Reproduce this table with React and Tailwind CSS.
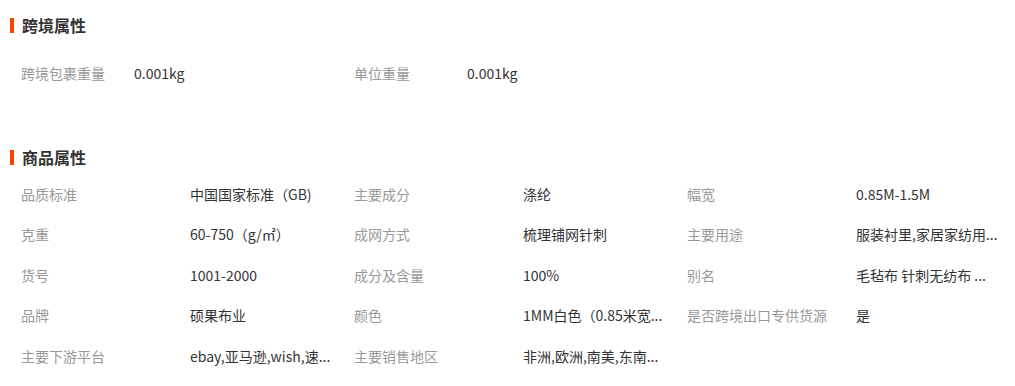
const font = { fontFamily: '"Noto Sans CJK SC", "Noto Sans", sans-serif' };

const cross = [
  ["跨境包裹重量", "0.001kg"],
  ["单位重量", "0.001kg"],
];

const attrs = [
  ["品质标准", "中国国家标准（GB)"],
  ["主要成分", "涤纶"],
  ["幅宽", "0.85M-1.5M"],
  ["克重", "60-750（g/㎡）"],
  ["成网方式", "梳理铺网针刺"],
  ["主要用途", "服装衬里,家居家纺用..."],
  ["货号", "1001-2000"],
  ["成分及含量", "100%"],
  ["别名", "毛毡布 针刺无纺布 ..."],
  ["品牌", "硕果布业"],
  ["颜色", "1MM白色（0.85米宽..."],
  ["是否跨境出口专供货源", "是"],
  ["主要下游平台", "ebay,亚马逊,wish,速..."],
  ["主要销售地区", "非洲,欧洲,南美,东南..."],
];

function Title({ children }) {
  return (
    <div className="flex items-center h-[16px]">
      <div className="w-[4px] h-[15px] bg-[#ff4400] ml-[10px] mr-[8px]" />
      <div className="text-[16px] font-bold text-[#333] leading-[16px]">{children}</div>
    </div>
  );
}

export default function App() {
  return (
    <div className="w-[1015px] h-[386px] bg-white text-[14px] overflow-hidden" style={font}>
      <div className="pt-[17px]">
        <Title>跨境属性</Title>
      </div>
      <div className="flex pl-[21px] mt-[30px]">
        {cross.map(([k, v]) => (
          <div key={k} className="flex w-[333px] h-[20px] items-center">
            <div className="w-[113px] text-[#999] whitespace-nowrap">{k}</div>
            <div className="text-[#333] whitespace-nowrap">{v}</div>
          </div>
        ))}
      </div>
      <div className="mt-[66px]">
        <Title>商品属性</Title>
      </div>
      <div className="grid grid-cols-[333px_333px_333px] pl-[21px] mt-[19px] gap-y-[20.5px]">
        {attrs.map(([k, v]) => (
          <div key={k} className="flex h-[20px] items-center">
            <div className="w-[169px] text-[#999] whitespace-nowrap">{k}</div>
            <div className="text-[#333] whitespace-nowrap">{v}</div>
          </div>
        ))}
      </div>
    </div>
  );
}
